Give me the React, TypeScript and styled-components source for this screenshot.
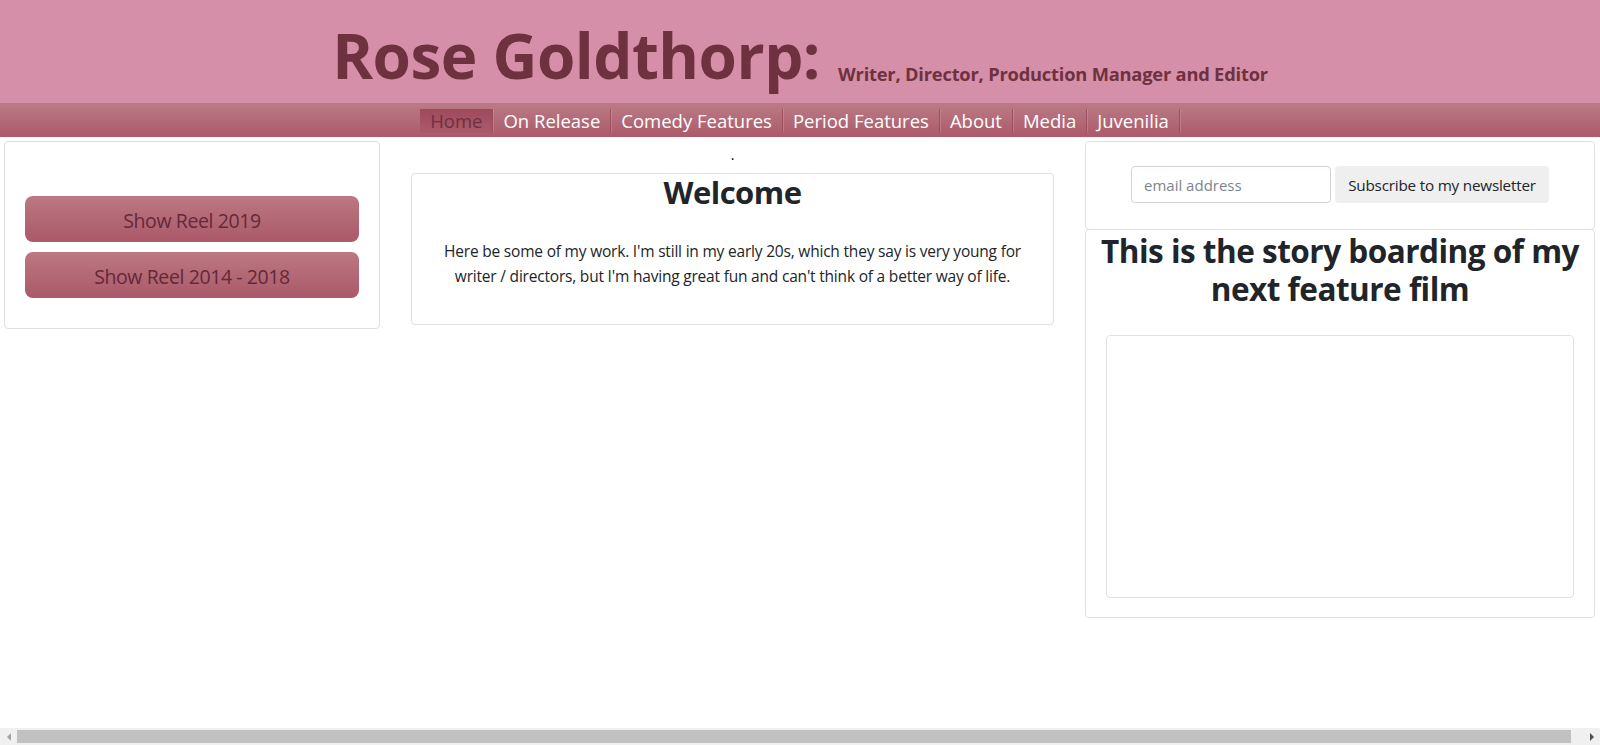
import React from "react";
import styled, { createGlobalStyle } from "styled-components";

const GlobalStyle = createGlobalStyle`
  html, body { margin: 0; padding: 0; background: #fff; }
  body {
    font-family: "Open Sans", "Noto Sans", sans-serif;
    color: #212529;
  }
  * { box-sizing: border-box; }
`;

const Header = styled.header`
  background: #d68fa8;
  height: 103px;
  display: flex;
  justify-content: center;
  align-items: flex-end;
  padding-bottom: 17px;
`;

const Title = styled.h1`
  margin: 0;
  font-size: 62px;
  line-height: 1;
  font-weight: 700;
  color: #6e3140;
  letter-spacing: -0.5px;
`;

const Subtitle = styled.span`
  font-size: 18.3px;
  font-weight: 700;
  color: #6e3140;
  margin-left: 18px;
  letter-spacing: -0.2px;
`;

const Nav = styled.nav`
  height: 34px;
  background: linear-gradient(#bb7b86, #ac5a6a);
  display: flex;
  justify-content: center;
  align-items: center;
  padding-top: 1px;
`;

const NavItem = styled.a<{ $active?: boolean }>`
  height: 24px;
  display: flex;
  align-items: center;
  padding: 0 10px;
  font-size: 18.5px;
  color: ${(p) => (p.$active ? "#6e3140" : "#ffffff")};
  background: ${(p) => (p.$active ? "linear-gradient(#9f4a5e, #ab5a6b)" : "transparent")};
  border-right: 1px solid #9d4f5f;
  box-shadow: 1px 0 0 rgba(255, 255, 255, 0.15);
  text-decoration: none;
  white-space: nowrap;
`;

const Columns = styled.main`
  display: grid;
  grid-template-columns: 376px 644px 511px;
  column-gap: 30px;
  align-items: start;
  padding: 4px 4px 0 4px;
`;

const Card = styled.section`
  border: 1px solid #dfdfdf;
  border-radius: 4px;
  background: #fff;
`;

const ReelCard = styled(Card)`
  display: flex;
  flex-direction: column;
  gap: 10px;
  padding: 54px 20px 30px 20px;
  height: 188px;
`;

const ReelButton = styled.button`
  height: 46px;
  border: none;
  border-radius: 8px;
  background: linear-gradient(#bc7882, #aa5968);
  color: #652838;
  font-family: "Open Sans", "Noto Sans", sans-serif;
  font-size: 19.5px;
  font-weight: 500;
  letter-spacing: -0.4px;
  padding-top: 3px;
  cursor: pointer;
`;

const MiddleCol = styled.div`
  display: flex;
  flex-direction: column;
  align-items: stretch;
  margin-left: 1px;
`;

const Dot = styled.div`
  height: 32px;
  padding-top: 5px;
  text-align: center;
  font-size: 14px;
  line-height: 18px;
  color: #000;
`;

const WelcomeCard = styled(Card)`
  height: 152px;
  padding: 0 20px;
  text-align: center;
`;

const Heading = styled.h2`
  margin: 0;
  font-size: 31px;
  font-weight: 700;
  line-height: 36px;
  color: #212529;
  letter-spacing: -0.5px;
`;

const Intro = styled.p`
  margin: 29px 0 0;
  font-size: 15.5px;
  line-height: 25px;
  font-weight: 400;
  color: #212529;
  letter-spacing: -0.2px;
`;

const RightCol = styled.div`
  display: flex;
  flex-direction: column;
  margin-left: 1px;
`;

const NewsletterCard = styled(Card)`
  height: 89px;
  display: flex;
  justify-content: center;
  align-items: center;
  gap: 4px;
  padding-bottom: 2px;
`;

const EmailInput = styled.input`
  width: 200px;
  height: 37px;
  border: 1px solid #ced4da;
  border-radius: 4px;
  padding: 0 12px;
  font-family: "Open Sans", "Noto Sans", sans-serif;
  font-size: 15px;
  color: #495057;
  &::placeholder { color: #7d858c; }
`;

const SubscribeButton = styled.button`
  width: 214px;
  height: 37px;
  border: none;
  border-radius: 4px;
  background: #efefef;
  font-family: "Open Sans", "Noto Sans", sans-serif;
  font-size: 15.25px;
  color: #212529;
  letter-spacing: -0.2px;
`;

const StoryCard = styled(Card)`
  height: 389px;
  padding: 2px 20px 19px;
  display: flex;
  flex-direction: column;
  margin-top: -1px;
`;

const StoryHeading = styled(Heading)`
  text-align: center;
  line-height: 37.5px;
  font-size: 31.5px;
  margin: 0 -16px;
`;

const StoryFrame = styled.div`
  margin-top: 28px;
  flex: 1;
  border: 1px solid #dee2e6;
  border-radius: 4px;
`;

const ScrollBar = styled.div`
  position: fixed;
  left: 0;
  right: 0;
  bottom: 0;
  height: 17px;
  background: #f0f0f0;
  display: flex;
  align-items: center;
`;

const ScrollArrow = styled.div<{ $dir: "left" | "right" }>`
  width: 17px;
  height: 17px;
  display: flex;
  align-items: center;
  justify-content: center;
  &::before {
    content: "";
    width: 0;
    height: 0;
    border-top: 4px solid transparent;
    border-bottom: 4px solid transparent;
    ${(p) => (p.$dir === "left" ? "border-right: 4px solid #a3a3a3;" : "border-left: 4px solid #505050;")}
  }
`;

const ScrollTrack = styled.div`
  flex: 1;
  height: 13px;
  display: flex;
  padding-right: 12px;
`;

const ScrollThumb = styled.div`
  flex: 1;
  background: #c1c1c1;
`;

const navItems = [
  "Home",
  "On Release",
  "Comedy Features",
  "Period Features",
  "About",
  "Media",
  "Juvenilia",
];

export default function App() {
  return (
    <>
      <GlobalStyle />
      <Header>
        <Title>Rose Goldthorp:</Title>
        <Subtitle>Writer, Director, Production Manager and Editor</Subtitle>
      </Header>
      <Nav>
        {navItems.map((item, i) => (
          <NavItem key={item} href="#" $active={i === 0}>
            {item}
          </NavItem>
        ))}
      </Nav>
      <Columns>
        <ReelCard>
          <ReelButton>Show Reel 2019</ReelButton>
          <ReelButton>Show Reel 2014 - 2018</ReelButton>
        </ReelCard>
        <MiddleCol>
          <Dot>.</Dot>
          <WelcomeCard>
            <Heading>Welcome</Heading>
            <Intro>
              Here be some of my work. I'm still in my early 20s, which they say is very young for
              writer / directors, but I'm having great fun and can't think of a better way of life.
            </Intro>
          </WelcomeCard>
        </MiddleCol>
        <RightCol>
          <NewsletterCard>
            <EmailInput placeholder="email address" />
            <SubscribeButton>Subscribe to my newsletter</SubscribeButton>
          </NewsletterCard>
          <StoryCard>
            <StoryHeading>This is the story boarding of my next feature film</StoryHeading>
            <StoryFrame />
          </StoryCard>
        </RightCol>
      </Columns>
      <ScrollBar>
        <ScrollArrow $dir="left" />
        <ScrollTrack>
          <ScrollThumb />
        </ScrollTrack>
        <ScrollArrow $dir="right" />
      </ScrollBar>
    </>
  );
}
